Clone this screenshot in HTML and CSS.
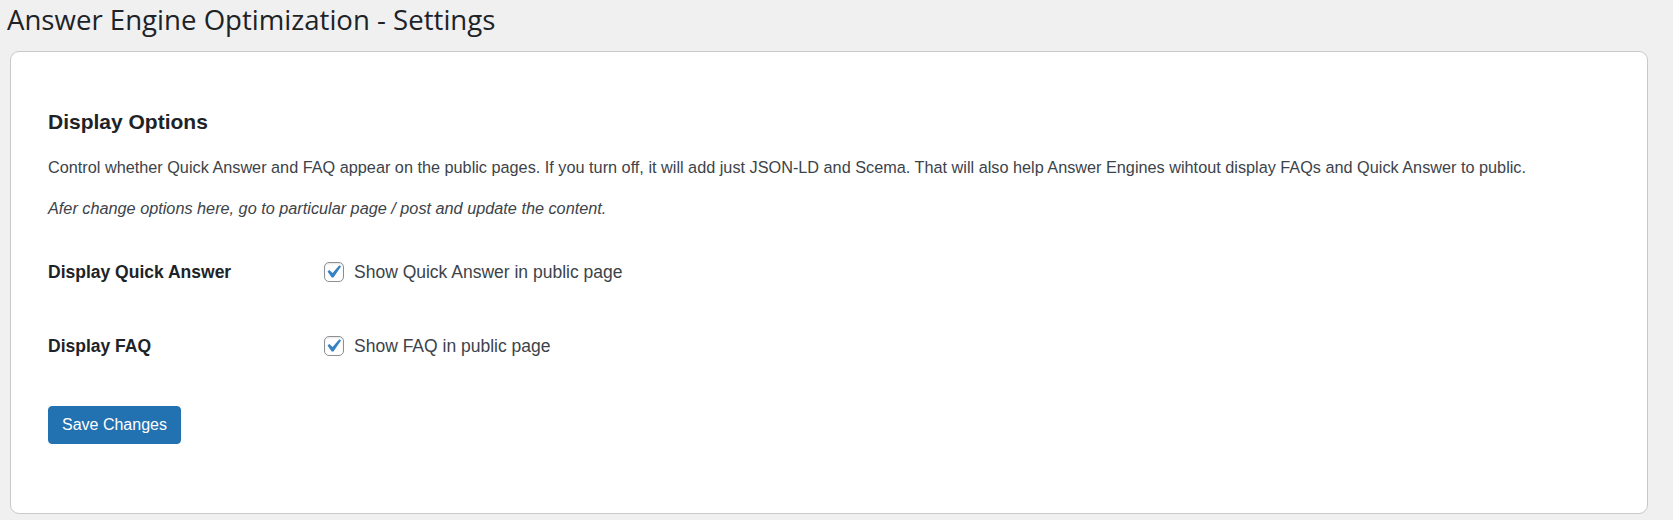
FILE: index.html
```html
<!DOCTYPE html>
<html lang="en">
<head>
    <meta charset="UTF-8">
    <title>Answer Engine Optimization - Settings</title>
    <link rel="stylesheet" href="styles.css">
</head>
<body>
    <div class="wrap">
        <h1 class="page-title">Answer Engine Optimization - Settings</h1>

        <div class="card">
            <h2>Display Options</h2>
            <p class="intro">Control whether Quick Answer and FAQ appear on the public pages. If you turn off, it will add just JSON-LD and Scema. That will also help Answer Engines wihtout display FAQs and Quick Answer to public.</p>
            <p class="note">Afer change options here, go to particular page / post and update the content.</p>

            <div class="form-table">
                <div class="form-row">
                    <div class="form-label">Display Quick Answer</div>
                    <label class="check">
                        <span class="box">
                            <svg viewBox="0 0 20 20"><path d="M14.83 4.89l1.34.94-5.81 8.38H9.02L5.78 9.67l1.34-1.25 2.57 2.4z"/></svg>
                        </span>
                        Show Quick Answer in public page
                    </label>
                </div>
                <div class="form-row">
                    <div class="form-label">Display FAQ</div>
                    <label class="check">
                        <span class="box">
                            <svg viewBox="0 0 20 20"><path d="M14.83 4.89l1.34.94-5.81 8.38H9.02L5.78 9.67l1.34-1.25 2.57 2.4z"/></svg>
                        </span>
                        Show FAQ in public page
                    </label>
                </div>
            </div>

            <button class="button-primary">Save Changes</button>
        </div>
    </div>
</body>
</html>
```

FILE: styles.css
```css
body {
    margin: 0;
    background: #f0f0f1;
    color: #3c434a;
    font-family: "Liberation Sans", Arial, sans-serif;
}

.wrap {
    padding: 0 25px 0 10px;
}

.page-title {
    margin: 0 0 0 -3px;
    font-family: "Open Sans", sans-serif;
    font-size: 27.6px;
    font-weight: 400;
    line-height: 36px;
    color: #1d2327;
    height: 51px;
    box-sizing: border-box;
    padding-top: 1px;
}

.card {
    background: #fff;
    border: 1px solid #c8c9cc;
    border-radius: 9px;
    padding: 55px 37px 69px;
    box-sizing: border-box;
}

h2 {
    margin: 0;
    font-size: 21px;
    line-height: 29px;
    font-weight: 700;
    color: #1d2327;
}

.intro,
.note {
    font-size: 16.25px;
    line-height: 24px;
    margin: 0;
}

.intro {
    margin-top: 19px;
}

.note {
    margin-top: 17px;
    font-style: italic;
}

.form-table {
    margin-top: 15px;
}

.form-row {
    display: grid;
    grid-template-columns: 276px 1fr;
    align-items: center;
    height: 74px;
}

.form-label {
    font-size: 17.5px;
    font-weight: 700;
    color: #1d2327;
}

.check {
    display: flex;
    align-items: center;
    gap: 10px;
    font-size: 17.5px;
    color: #3c434a;
}

.box {
    width: 20px;
    height: 20px;
    box-sizing: border-box;
    border: 1px solid #8c8f94;
    border-radius: 5px;
    background: #fff;
    box-shadow: inset 0 1px 2px rgba(0, 0, 0, 0.1);
    position: relative;
}

.box svg {
    position: absolute;
    left: -5px;
    top: -4px;
    width: 26px;
    height: 26px;
    fill: #3582c4;
}

.button-primary {
    margin-top: 23px;
    height: 38px;
    padding: 0 13px;
    border: 1px solid #2271b1;
    border-radius: 4px;
    background: #2271b1;
    color: #fff;
    font-family: "Liberation Sans", Arial, sans-serif;
    font-size: 16px;
    cursor: pointer;
}
```
